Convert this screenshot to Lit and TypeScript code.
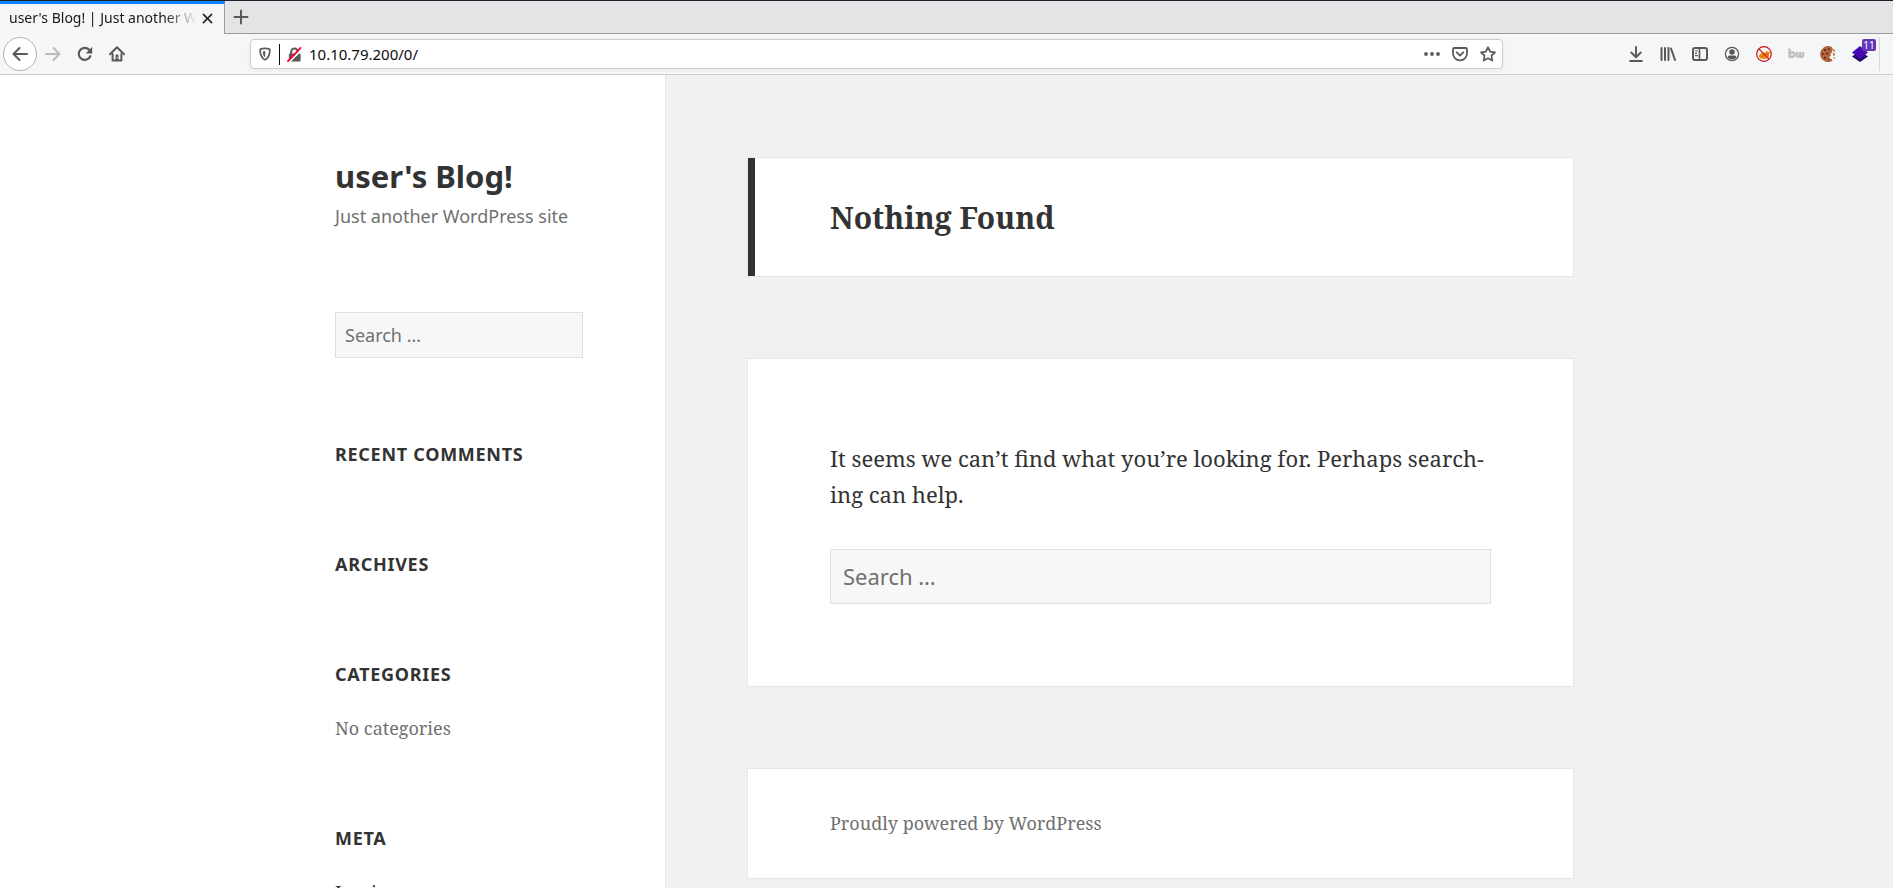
import { LitElement, html, css, svg } from "lit";
import { customElement } from "lit/decorators.js";

const icon = (body: unknown, size = 16) =>
  html`<svg width=${size} height=${size} viewBox="0 0 16 16" aria-hidden="true">${body}</svg>`;

const line = (d: string, w = 2) =>
  svg`<path d=${d} fill="none" stroke="currentColor" stroke-width=${w} stroke-linecap="round" stroke-linejoin="round"/>`;

const icons = {
  back: line("M15 8H1.500M7.500 2L1.500 8l6 6"),
  forward: line("M1 8h13.500M8.500 2l6 6-6 6"),
  reload: svg`${line("M13.300 10.200A6 6 0 1 1 12.200 3.800", 2.2)}<path d="M15.200 .8v6.600H8.600z" fill="currentColor"/>`,
  home: svg`${line("M1 8.300L8 1.300l7 7", 2)}${line("M3.600 8v6.400h8.800V8", 2)}<path d="M6.500 15V9.500q0-1 1-1h1q1 0 1 1V15z" fill="currentColor"/><path d="M7.700 11h1v1h-1z" fill="#f5f6f7"/>`,
  close: line("M3 3l10 10M13 3L3 13", 2),
  plus: line("M8 1.500v13M1.500 8h13", 2),
  shield: svg`${line("M8 1.500c2 0 4 .4 5.500 1 .2 6-1.300 10-5.500 12-4.200-2-5.700-6-5.500-12 1.500-.6 3.500-1 5.500-1z", 2)}<path d="M8.300 4.500v7.300C6.300 10.500 5.500 8.500 5.500 5q1.300-.5 2.800-.5z" fill="currentColor"/>`,
  lock: svg`<path d="M4.500 7.500V5a3.500 3.500 0 0 1 7 0v2.500" fill="none" stroke="currentColor" stroke-width="2.200"/><rect x="2" y="7" width="12.500" height="8.500" rx="1" fill="currentColor"/><path d="M2 16.500L16 2.500" stroke="#fff" stroke-width="1.800"/><path d="M1 15L14.500 1" stroke="#ff0039" stroke-width="2" stroke-linecap="round"/>`,
  dots: svg`<circle cx="2" cy="8" r="1.900" fill="currentColor"/><circle cx="8" cy="8" r="1.900" fill="currentColor"/><circle cx="14" cy="8" r="1.900" fill="currentColor"/>`,
  pocket: svg`${line("M2.200 2h11.600q1.200 0 1.200 1.200V7.500A7 6.800 0 0 1 1 7.500V3.200Q1 2 2.200 2z", 1.8)}${line("M4.700 6.300L8 9.500l3.300-3.200", 1.8)}`,
  star: line("M8 1.200l2.100 4.500 4.900.6-3.600 3.400.9 4.900L8 12.200l-4.300 2.400.9-4.900L1 6.300l4.900-.6z", 1.7),
  download: line("M8 1v10M3.200 6.500L8 11.200l4.800-4.700M2.200 15h11.600", 1.9),
  library: line("M1.500 2v12M5 2v12M8.500 2v12M11 2.500L15 14", 2),
  sidebar: svg`<rect x="1" y="2" width="14" height="12" rx="2" fill="none" stroke="currentColor" stroke-width="2"/><path d="M7.500 2v12" stroke="currentColor" stroke-width="1.600"/><path d="M3 5h3M3 7.300h2M3 9.600h3" stroke="currentColor" stroke-width="1.200"/>`,
  account: svg`<circle cx="8" cy="8" r="6.600" fill="none" stroke="currentColor" stroke-width="1.300"/><circle cx="8" cy="6" r="2.800" fill="currentColor"/><path d="M3.500 11.200C4.500 9 6 9.600 8 9.600s3.500-.6 4.500 1.600C11.500 12.500 10 13.300 8 13.300s-3.500-.8-4.500-2.100z" fill="currentColor"/>`,
  blocked: svg`<path d="M3 10.500c-.3-2 1.500-3.300 4-3.500l2.500-.5 1-1.700 1.500.9 2 .3-.8 2.500c.3 2.500-1.500 4.500-5 4.500-3.300 0-5-.8-5.200-2.500z" fill="#ee8a1c"/><path d="M10 8l2 .3M5 10.500l2.500-.8" stroke="#9c4f12" stroke-width=".8"/><circle cx="8" cy="8" r="7.300" fill="none" stroke="#cc1212" stroke-width="1.200"/><path d="M2.900 2.900l10.200 10.200" stroke="#cc1212" stroke-width="1.200"/>`,
  bw: svg`<g fill="none" stroke="#bfc0c1" stroke-width="2.400" stroke-linejoin="round"><path d="M1.500 2.500v8.300h3.300q1.700 0 1.700-2.200T4.800 6.500H1.500M9 6v3.300q0 1.500 1.400 1.500h3.200q1.400 0 1.400-1.500V6M12 6v4.500"/></g>`,
  cookie: svg`<path d="M11.500 .8A8 8 0 1 0 12.500 14.800l-.8-1.800-2-.5-.2-2 1.500-1.300-.5-1.700 1.800-1.200-.6-1.800 1.500-1z" fill="#b3643a"/><g fill="#4d2417"><circle cx="5" cy="4" r="1"/><circle cx="9" cy="3.200" r=".9"/><circle cx="2.800" cy="8" r=".9"/><circle cx="7" cy="7.500" r="1"/><circle cx="4.800" cy="11.800" r="1"/><circle cx="8.500" cy="13.500" r=".7"/></g><path d="M12.500 2.800l2.500 1V6l-2-.5zM12.500 7.300l2.500-.3v2.200l-1.500 1zM13.500 11.200H15.200v1.500h-1.700z" fill="#c98862"/>`,
  layers: svg`<path d="M8 5l8 5.500L8 16 0 10.500z" fill="#1f0670"/><path d="M8 0l8 6.500L8 13 0 6.500z" fill="#4a08b5"/>`,
};

@customElement("browser-chrome")
class BrowserChrome extends LitElement {
  static styles = css`
    :host { display: block; color: #58595b; font-family: "Noto Sans", sans-serif; }
    * { box-sizing: border-box; }
    svg { display: block; flex: none; overflow: visible; }
    button { display: grid; place-items: center; padding: 0; border: 0; background: none; color: inherit; font: inherit; width: 32px; height: 32px; flex: none; }
    .tabs { display: flex; height: 34px; border-top: 1px solid #211d2b; background: #e3e4e6; }
    .tab { display: flex; align-items: center; width: 225px; border-top: 3px solid #0a84ff; border-right: 1px solid #9b9ca0; background: #f5f6f7; padding: 0 8px 2px 9px; }
    .label { flex: 1; overflow: hidden; white-space: nowrap; font-size: 14px; line-height: 20px; color: #17181a; mask-image: linear-gradient(to right, #000 155px, transparent 188px); }
    .close { width: 18px; height: 20px; color: #222; }
    .rest { flex: 1; display: flex; align-items: center; border-bottom: 1px solid #9b9ca0; }
    .bar { display: flex; align-items: center; height: 41px; padding: 0 13px 0 3px; background: #f5f6f7; border-bottom: 1px solid #ccc; }
    .back { border: 1px solid #b1b1b3; border-radius: 50%; background: #fff; width: 34px; height: 34px; }
    .off { color: #b9babc; }
    .url { flex: 1; display: flex; align-items: center; min-width: 0; height: 30px; margin: 0 117px; border: 1px solid #ccc; border-radius: 4px; background: #fff; box-shadow: 0 1px 4px #0000000d; }
    .url button { width: 28px; height: 28px; }
    .split { width: 1px; height: 21px; background: #0c0c0d; }
    .address { flex: 1; min-width: 0; border: 0; padding: 0 0 0 1px; background: none; outline: 0; font: inherit; font-size: 15px; color: #0c0c0d; }
    .layers { position: relative; }
    .badge { position: absolute; top: 1px; right: 0; width: 14px; height: 12px; border-radius: 2px; background: #6336b8; color: #fff; font-size: 10px; line-height: 12px; text-align: center; }
    .end { width: 1px; height: 34px; margin-left: 3px; background: #d7d8da; }
  `;

  render() {
    return html`
      <div class="tabs">
        <div class="tab">
          <span class="label">user's Blog! | Just another WordPress site</span>
          <button class="close" aria-label="Close tab">${icon(icons.close, 13)}</button>
        </div>
        <div class="rest"><button aria-label="New tab">${icon(icons.plus, 16)}</button></div>
      </div>
      <div class="bar">
        <button class="back" aria-label="Back">${icon(icons.back)}</button>
        <button class="off" aria-label="Forward">${icon(icons.forward)}</button>
        <button aria-label="Reload">${icon(icons.reload)}</button>
        <button aria-label="Home">${icon(icons.home)}</button>
        <div class="url">
          <button aria-label="Tracking protection">${icon(icons.shield, 14)}</button>
          <span class="split"></span>
          <button aria-label="Connection is not secure">${icon(icons.lock, 15)}</button>
          <input class="address" type="text" aria-label="Address" .value=${"10.10.79.200/0/"} />
          <button aria-label="Page actions">${icon(icons.dots)}</button>
          <button aria-label="Save to Pocket">${icon(icons.pocket)}</button>
          <button aria-label="Bookmark">${icon(icons.star)}</button>
        </div>
        <button aria-label="Downloads">${icon(icons.download)}</button>
        <button aria-label="Library">${icon(icons.library)}</button>
        <button aria-label="Sidebars">${icon(icons.sidebar)}</button>
        <button aria-label="Account">${icon(icons.account)}</button>
        <button aria-label="Proxy off">${icon(icons.blocked)}</button>
        <button aria-label="Site profiler">${icon(icons.bw)}</button>
        <button aria-label="Cookies">${icon(icons.cookie)}</button>
        <button class="layers" aria-label="Technologies">${icon(icons.layers)}<span class="badge">11</span></button>
        <span class="end"></span>
      </div>
    `;
  }
}

@customElement("app-root")
class AppRoot extends LitElement {
  static styles = css`
    :host { display: flex; flex-direction: column; height: 100vh; overflow: hidden; color: #333; font-family: "Noto Serif", "DejaVu Serif Condensed", "DejaVu Serif", serif; }
    * { box-sizing: border-box; }
    h1, h2, p { margin: 0; }
    a { color: inherit; text-decoration: none; }
    .page { flex: 1; min-height: 0; display: grid; grid-template-columns: calc(round(up, 50vw, 1px) - 281px) 1fr; background: #f1f1f1; }
    .side { display: flex; flex-direction: column; align-items: flex-end; overflow: hidden; min-height: 0; background: #fff; border-right: 1px solid #e7e7e7; padding: 81px 82px 0 0; }
    .inner { width: 248px; }
    .site, .tagline, .heading, .search { font-family: "Noto Sans", sans-serif; }
    .site { font-size: 31px; line-height: 40px; font-weight: 700; }
    .tagline { font-size: 18px; line-height: 28px; padding-top: 6px; color: #707070; white-space: nowrap; }
    .search { display: block; width: 100%; border: 1px solid #e0e0e0; border-radius: 0; background: #f7f7f7; outline: 0; }
    .search::placeholder { color: #707070; opacity: 1; }
    .small { height: 46px; margin: 82px 0; padding: 0 9px; font-size: 18px; }
    .widget { margin-bottom: 82px; }
    .heading { font-size: 18px; line-height: 28px; font-weight: 700; letter-spacing: 0.04em; text-transform: uppercase; }
    .item { font-size: 18px; line-height: 28px; padding-top: 26px; }
    .muted { color: #707070; }
    .main { display: flex; flex-direction: column; gap: 83px; overflow: hidden; min-height: 0; padding: 83px 82px; }
    .card { flex: none; width: 100%; max-width: 825px; background: #fff; box-shadow: 0 0 0 1px #0000000b; padding: 81px 82px 82px; }
    .head { border-left: 7px solid #333; padding: 40px 75px 38px; }
    .title { font-size: 30px; line-height: 40px; font-weight: 700; }
    .text { font-size: 22px; line-height: 36px; hyphens: manual; }
    .large { height: 55px; margin-top: 37px; padding: 0 12px 2px; font-size: 22px; }
    .foot { padding: 41px 82px; font-size: 18px; line-height: 27px; color: #707070; }
  `;

  render() {
    return html`
      <browser-chrome></browser-chrome>
      <div class="page">
        <aside class="side">
          <div class="inner">
            <h1 class="site"><a href="#">user's Blog!</a></h1>
            <p class="tagline">Just another WordPress site</p>
            <input class="search small" type="search" placeholder="Search …" aria-label="Search for" />
            <section class="widget"><h2 class="heading">Recent Comments</h2></section>
            <section class="widget"><h2 class="heading">Archives</h2></section>
            <section class="widget">
              <h2 class="heading">Categories</h2>
              <p class="item muted">No categories</p>
            </section>
            <section class="widget">
              <h2 class="heading">Meta</h2>
              <p class="item"><a href="#">Log in</a></p>
            </section>
          </div>
        </aside>
        <main class="main">
          <header class="card head"><h1 class="title">Nothing Found</h1></header>
          <section class="card">
            <p class="text">It seems we can’t find what you’re looking for. Perhaps search&shy;ing can help.</p>
            <input class="search large" type="search" placeholder="Search …" aria-label="Search for" />
          </section>
          <footer class="card foot"><a href="#">Proudly powered by WordPress</a></footer>
        </main>
      </div>
    `;
  }
}
